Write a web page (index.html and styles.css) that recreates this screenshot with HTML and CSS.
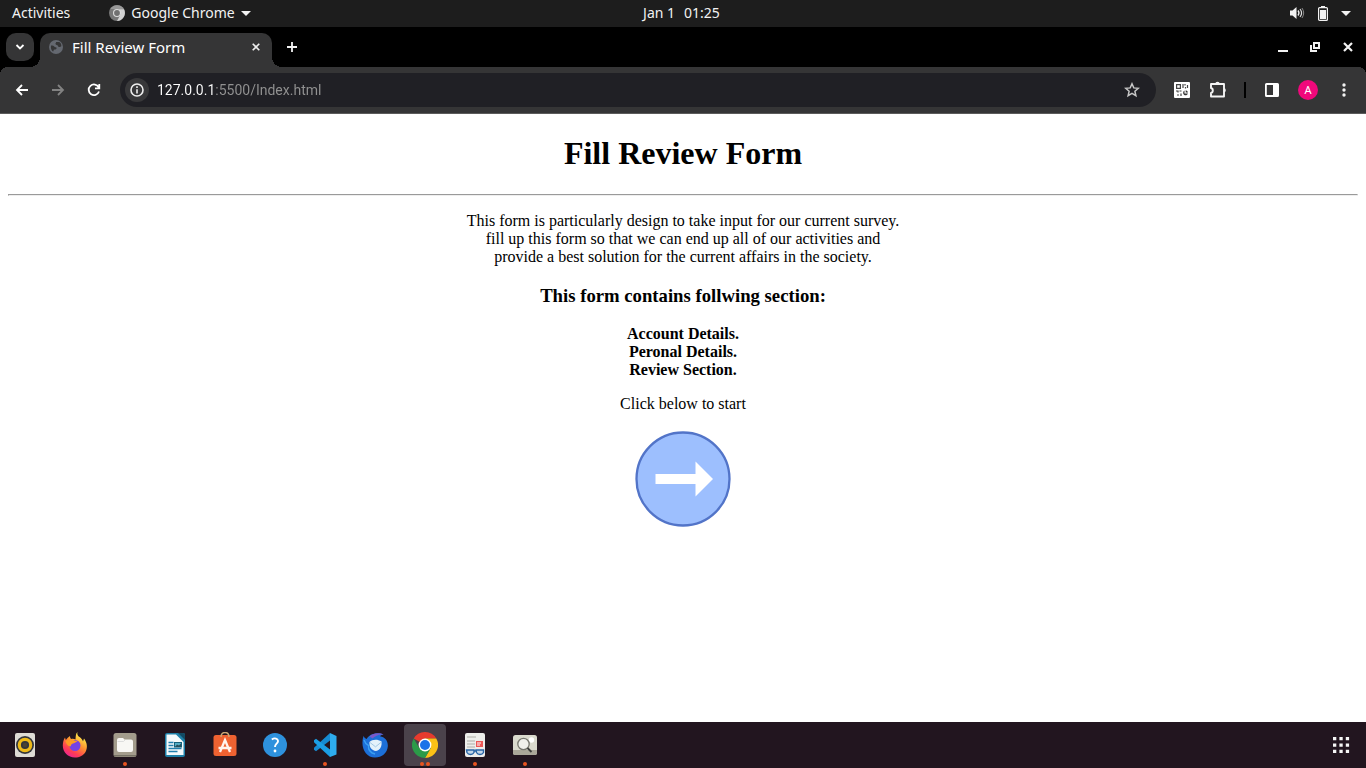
FILE: index.html
```html
<!DOCTYPE html>
<html lang="en">
<head>
<meta charset="utf-8">
<title>Fill Review Form</title>
<link rel="stylesheet" href="styles.css">
</head>
<body>
<header class="topbar">
  <div class="topbar-left">
    <button class="bar-button">Activities</button>
    <button class="bar-button app-menu">
      <svg width="16" height="16" viewBox="0 0 16 16" aria-hidden="true"><circle cx="8" cy="8" r="8" fill="#777"/><path d="M1.200 4A8 8 0 0 1 15 4.300H8z" fill="#999"/><path d="M15 4.300A8 8 0 0 1 8 16L11.500 9.500 10 4.300z" fill="#d2d2d2"/><circle cx="8" cy="8" r="4" fill="#ddd"/><circle cx="8" cy="8" r="2.900" fill="#707070"/></svg>
      <span>Google Chrome</span>
      <svg width="10" height="5" viewBox="0 0 10 5" aria-hidden="true"><path d="M0 0h10L5 5z" fill="#f2f2f2"/></svg>
    </button>
  </div>
  <button class="bar-button clock"><span>Jan 1</span><span>01:25</span></button>
  <button class="bar-button status" aria-label="System menu">
    <svg width="16" height="14" viewBox="0 0 16 14"><path d="M1 4.500h2.500L7.500 1v12L3.500 9.500H1z" fill="#f2f2f2"/><path d="M9 4.500q2 2.500 0 5" fill="none" stroke="#f2f2f2" stroke-width="1.300"/><path d="M11 3q3.200 4 0 8" fill="none" stroke="#ddd" stroke-width="1.200"/><path d="M13 2q3.400 5 0 10" fill="none" stroke="#888" stroke-width="1"/></svg>
    <svg width="10" height="15" viewBox="0 0 10 15"><path d="M3 0h4v1.500H3z" fill="#f2f2f2"/><rect x=".6" y="1.600" width="8.800" height="12.800" rx="1" fill="none" stroke="#f2f2f2" stroke-width="1.200"/><path d="M2 4h6v9H2z" fill="#f2f2f2"/></svg>
    <svg width="10" height="5" viewBox="0 0 10 5"><path d="M0 0h10L5 5z" fill="#f2f2f2"/></svg>
  </button>
</header>

<nav class="tabstrip" aria-label="Tabs">
  <button class="tab-search" aria-label="Search tabs"><svg width="10" height="6" viewBox="0 0 10 6"><path d="M1.500 1L5 4.500 8.500 1" fill="none" stroke="#fff" stroke-width="1.800"/></svg></button>
  <div class="tab">
    <svg width="14" height="14" viewBox="0 0 14 14" aria-hidden="true"><circle cx="7" cy="7" r="7" fill="#646870"/><path d="M2 5.500c2 0 3 .4 3.500 1.300s1.500 0 2 .9-.7 1.800-2 1.800-.6 2-1.500 2C2.300 10.300 1.500 8 2 5.500zM7 2h3.300c1.500 1 2.200 2.500 2 4.300-1.200 1.300-2.800.9-3.300-.4-.5-1-2-.6-2.500-1.800S7.500 3.300 7 2z" fill="#353536"/></svg>
    <span class="tab-title">Fill Review Form</span>
    <button class="tab-close" aria-label="Close tab"><svg width="8" height="8" viewBox="0 0 8 8"><path d="M.7.7l6.600 6.600M7.300.7L.7 7.300" stroke="#eee" stroke-width="1.600"/></svg></button>
  </div>
  <button class="new-tab" aria-label="New tab"><svg width="10" height="10" viewBox="0 0 10 10"><path d="M5 0v10M0 5h10" stroke="#f2f2f2" stroke-width="1.800"/></svg></button>
  <div class="window-controls">
    <button aria-label="Minimize"><svg width="12" height="12" viewBox="0 0 12 12"><path d="M1 9h10v2H1z" fill="#f2f2f2"/></svg></button>
    <button aria-label="Restore"><svg width="12" height="12" viewBox="0 0 12 12"><path d="M5 2h5v5H5zM2 4v6h6" fill="none" stroke="#f2f2f2" stroke-width="2"/></svg></button>
    <button aria-label="Close"><svg width="12" height="12" viewBox="0 0 12 12"><path d="M2 2l8 8M10 2l-8 8" stroke="#f2f2f2" stroke-width="2.200"/></svg></button>
  </div>
</nav>

<div class="toolbar">
  <button class="icon-button" aria-label="Back"><svg width="16" height="16" viewBox="0 0 16 16"><path d="M14 8H3M8 3L3 8l5 5" fill="none" stroke="#fff" stroke-width="1.800"/></svg></button>
  <button class="icon-button" aria-label="Forward"><svg width="16" height="16" viewBox="0 0 16 16"><path d="M2 8h11M8 3l5 5-5 5" fill="none" stroke="#828282" stroke-width="1.800"/></svg></button>
  <button class="icon-button" aria-label="Reload"><svg width="16" height="16" viewBox="0 0 16 16"><path d="M12.700 5.300A5.300 5.300 0 1 0 13 9.500M13.300 2v4.300H9" fill="none" stroke="#fff" stroke-width="1.800"/></svg></button>
  <div class="omnibox">
    <button class="site-info" aria-label="View site information"><svg width="14" height="14" viewBox="0 0 14 14"><circle cx="7" cy="7" r="6" fill="none" stroke="#eee" stroke-width="1.600"/><path d="M6.200 3.300h1.600V5H6.200zM6.200 6.200h1.600v4.300H6.200z" fill="#eee"/></svg></button>
    <input class="address" type="text" value="127.0.0.1:5500/Index.html" aria-label="Address" spellcheck="false">
    <button class="bookmark" aria-label="Bookmark this page"><svg width="16" height="16" viewBox="0 0 16 16"><path d="M8 1.800l1.800 4.100 4.500.4-3.400 3 1 4.400L8 11.400l-3.900 2.300 1-4.400-3.400-3 4.500-.4z" fill="none" stroke="#c7c7c7" stroke-width="1.500"/></svg></button>
  </div>
  <div class="extensions">
    <button class="icon-button" aria-label="QR code"><svg width="16" height="16" viewBox="0 0 16 16"><rect width="16" height="16" rx="1" fill="#fff"/><path d="M2.600 2.600h3.800v3.800H2.600zM9 2v4M11 2v1.500M13.500 3v3M11.500 5v1.500M2 9h2v1.500M5.500 9h2M3 13h2M7 11.500V14" fill="none" stroke="#444" stroke-width="1.200"/><path d="M10.500 8.500v3h3.500a2.500 2.500 0 1 1-3.500-3zM11.700 8.200a2.800 2.800 0 0 1 2.300 2.300h-2.300z" fill="#333"/></svg></button>
    <button class="icon-button" aria-label="Extensions"><svg width="18" height="18" viewBox="0 0 18 18"><path d="M2 3h13v12.500H2V12c2.400-.4 2.400-4.600 0-5z" fill="none" stroke="#f4f4f4" stroke-width="1.900" stroke-linejoin="round"/><path d="M6.300 3a2.200 2.200 0 0 1 4.400 0zM15 7a2.300 2.300 0 0 1 0 4.500z" fill="#f4f4f4"/></svg></button>
    <span class="divider"></span>
    <button class="icon-button" aria-label="Side panel"><svg width="16" height="16" viewBox="0 0 16 16"><rect x="1.900" y="2" width="12.200" height="12" rx=".6" fill="none" stroke="#fff" stroke-width="1.800"/><path d="M9 2h5v12H9z" fill="#fff"/></svg></button>
    <button class="icon-button" aria-label="Profile"><span class="avatar">A</span></button>
    <button class="icon-button" aria-label="Browser menu"><svg width="4" height="16" viewBox="0 0 4 16"><g fill="#f2f2f2"><circle cx="2" cy="3" r="1.700"/><circle cx="2" cy="8" r="1.700"/><circle cx="2" cy="13" r="1.700"/></g></svg></button>
  </div>
</div>

<main class="page">
  <h1>Fill Review Form</h1>
  <hr>
  <p>This form is particularly design to take input for our current survey.<br>fill up this form so that we can end up all of our activities and<br>provide a best solution for the current affairs in the society.</p>
  <h3>This form contains follwing section:</h3>
  <p class="sections">Account Details.<br>Peronal Details.<br>Review Section.</p>
  <p>Click below to start</p>
  <a class="start" href="#start" aria-label="Start"><svg width="100" height="100" viewBox="0 0 100 100"><circle cx="50" cy="50" r="46.500" fill="#9dbffe" stroke="#5274c8" stroke-width="2.300"/><path d="M22.500 45h40V32.500L80 50 62.500 67.500V55h-40z" fill="#fff"/></svg></a>
</main>

<footer class="dock">
  <div class="dock-apps">
    <button class="app" aria-label="Rhythmbox"><svg width="26" height="26" viewBox="0 0 26 26"><rect x="3" y="1" width="20" height="24" rx="2" fill="#dedbd5"/><circle cx="13" cy="13" r="9" fill="#34363b"/><circle cx="13" cy="13" r="5.700" fill="none" stroke="#efba19" stroke-width="3.200"/><circle cx="13" cy="13" r="2.200" fill="#4b4332"/></svg></button>
    <button class="app" aria-label="Firefox"><svg width="26" height="26" viewBox="0 0 26 26"><defs><linearGradient id="fox" x1=".8" y1="0" x2=".2" y2="1"><stop offset=".1" stop-color="#fff04a"/><stop offset=".45" stop-color="#ff9030"/><stop offset=".75" stop-color="#ff3b55"/><stop offset="1" stop-color="#e920a0"/></linearGradient></defs><path d="M15.500 0c-.8 2.500.5 4 2 5 2 1.300 3 3 3.500 4.500l1-3c3 4 4 9 1.500 13.500-2 3.500-6 5.500-10.500 5.500C6 25.500.8 20.300.8 13.800.8 10.500 1.500 7.700 3 5.500L3.800 8C5 6.300 6.500 5 8 4c0 1.300.4 2.200 1.200 3 1.700-.3 3-.1 4.300.5.3-3 0-5.500 2-7.500z" fill="url(#fox)"/><circle cx="13" cy="13.500" r="5.500" fill="#7542e5"/><path d="M3.500 9c3-2 6-2 9-.5l3 .7-3 1.800c-2.300.4-3.500 1.500-3.800 3.300C6.500 14.500 4 12 3.500 9z" fill="#ff9b24"/></svg></button>
    <button class="app running" aria-label="Files"><svg width="26" height="26" viewBox="0 0 26 26"><rect x="1.500" y="1" width="23" height="24" rx="2.500" fill="#a39c8c"/><path d="M2 23h22v1.500H2z" fill="#777265"/><path d="M5 8q0-2 2-2h4l1.500 1.500H19q2 0 2 2V18q0 2-2 2H7q-2 0-2-2z" fill="#f8f7f4"/><path d="M5.500 9.500h6L13 8" stroke="#ddd" fill="none"/></svg></button>
    <button class="app" aria-label="Writer"><svg width="26" height="26" viewBox="0 0 26 26"><path d="M3 3q0-2 2-2h16q2 0 2 2v20q0 2-2 2H5q-2 0-2-2z" fill="#1e80a8"/><path d="M4.500 2.500H14L21.500 10v13h-17z" fill="#f5fafb"/><path d="M16 1h5q2 0 2 2v5z" fill="#124a63"/><path d="M6.500 10.500h5M6.500 13.500h5M6.500 16.500h13M6.500 19.500h9" stroke="#217fae" stroke-width="1.300"/><rect x="12.500" y="10.500" width="7" height="4.500" fill="#54adc6" stroke="#16617b"/><path d="M13 15l2-2.500 2 1 2-2V15z" fill="#244e5c"/></svg></button>
    <button class="app" aria-label="Software"><svg width="26" height="26" viewBox="0 0 26 26"><rect x="1.500" y="3" width="23" height="21" rx="2.500" fill="#ef6231"/><path d="M9 5q0-4.500 4-4.500T17 5" fill="none" stroke="#cba775" stroke-width="1.400"/><path d="M8 20l5-12 5 12M6.500 16h13" fill="none" stroke="#fff3ed" stroke-width="2.300"/></svg></button>
    <button class="app" aria-label="Help"><svg width="26" height="26" viewBox="0 0 26 26"><circle cx="13" cy="13" r="12" fill="#2e91dd"/><path d="M9.800 7.500c4-2.800 7.500.5 5.700 3-.9 1.400-2.500 2-2.500 4.500" fill="none" stroke="#fff" stroke-width="1.900"/><circle cx="13" cy="19" r="1.400" fill="#fff"/></svg></button>
    <button class="app running" aria-label="Visual Studio Code"><svg width="26" height="26" viewBox="0 0 26 26"><path d="M18 1l6.500 3v18.500L18 25z" fill="#2eacee"/><path d="M18 8.500V1L2 15.800v2l2 1.500z" fill="#168bd2"/><path d="M18 17.500V25L2 10.200v-2l2-1.500z" fill="#1b9ee5"/></svg></button>
    <button class="app" aria-label="Thunderbird"><svg width="26" height="26" viewBox="0 0 26 26"><path d="M1.500 4c.8 1.500 1.800 2.500 3.200 3C7 2 15-.5 21.500 2.500c-1.500.2-2.500.8-3.500 1.700 5 .8 8.300 4.800 7.800 10.300C25.300 21 20 25.500 13 25.500 3.500 25.500-2 15 1.500 4z" fill="#1c6fd8"/><path d="M7.500 4.500C11 .8 18 .5 21.500 2.500c-5-.4-8.500 1.600-11 4z" fill="#7b59c9"/><path d="M7.500 10c2.500-2.500 8-3 12-.5.5 4.500-1 8.500-5.500 9.500-4.500-.5-7-4-6.500-9z" fill="#e4f1fa"/><path d="M8 10.500l5.500 4.300 6-4.800" stroke="#a3c9e6" fill="none"/><path d="M2 8c1 3 2.500 4.500 4.500 5.500C6 18 9 21 13 22" fill="none" stroke="#3ba0f2" stroke-width="1.400"/></svg></button>
    <button class="app active running" aria-label="Google Chrome"><svg width="26" height="26" viewBox="0 0 26 26"><path d="M13 13L1.740 6.500A13 13 0 0 1 24.260 6.500H13z" fill="#e63b2e"/><path d="M13 13l5.600 3.300L13 26A13 13 0 0 0 24.260 6.500H13z" fill="#fbc116"/><path d="M13 13v6.500L13 26A13 13 0 0 1 1.740 6.500L7.400 16.300z" fill="#2b9b48"/><path d="M13 26l5.600-9.700L13 13l-5.600 3.300L12 20z" fill="#2b9b48"/><circle cx="13" cy="13" r="6.400" fill="#fff"/><circle cx="13" cy="13" r="5" fill="#1a73e8"/></svg></button>
    <button class="app running" aria-label="Document Viewer"><svg width="26" height="26" viewBox="0 0 26 26"><rect x="3" y="1" width="20" height="24" rx="2" fill="#eeedeb"/><path d="M5 5h9M5 9h8M5 12h8M5 15h8" stroke="#c4c2bf" stroke-width="1.500"/><rect x="14" y="9" width="7" height="6" fill="#ed5756"/><path d="M15 11h4M15 13h3" stroke="#fff"/><path d="M4.500 18h7.500v2.500q-1 2-3.500 2t-3.500-2zM14 18h7.500v2.500q-1 2-3.500 2t-3.500-2zM12 19h2" fill="#c2d6e9" stroke="#2865a7" stroke-width="1.400"/></svg></button>
    <button class="app running" aria-label="Image Viewer"><svg width="26" height="26" viewBox="0 0 26 26"><rect x="1" y="3" width="24" height="20" rx="2.500" fill="#dad9cd"/><path d="M1 18h24v3q0 2-2 2H3q-2 0-2-2z" fill="#aaa799"/><circle cx="19.500" cy="8" r="2.700" fill="#fff"/><circle cx="11.500" cy="12" r="5.700" fill="#f0f0eb" stroke="#77776f" stroke-width="1.300"/><path d="M15.500 16l4 4" stroke="#3d3d3b" stroke-width="1.800"/></svg></button>
  </div>
  <button class="app" aria-label="Show applications"><svg width="18" height="18" viewBox="0 0 18 18"><path d="M1 1h3.300v3.300H1zM7.400 1h3.300v3.300H7.400zM13.800 1h3.300v3.300h-3.300zM1 7.400h3.300v3.300H1zM7.400 7.400h3.300v3.300H7.400zM13.800 7.400h3.300v3.300h-3.300zM1 13.800h3.300v3.300H1zM7.400 13.800h3.300v3.300H7.400zM13.800 13.800h3.300v3.300h-3.300z" fill="#f5f5f5"/></svg></button>
</footer>
</body>
</html>
```
FILE: styles.css
```css
* { box-sizing: border-box; }

body {
  margin: 0;
  height: 100vh;
  display: flex;
  flex-direction: column;
  background: #fff;
  color: #000;
  font-family: "Noto Sans", sans-serif;
  font-size: 14px;
}

button {
  margin: 0;
  padding: 0;
  border: 0;
  background: none;
  color: inherit;
  font: inherit;
  display: flex;
  align-items: center;
  justify-content: center;
}

svg { display: block; flex: none; }

/* Desktop bar */
.topbar {
  flex: none;
  height: 27px;
  padding: 0 15px 1px 12px;
  display: grid;
  grid-template-columns: 1fr auto 1fr;
  align-items: center;
  background: #1d1d1d;
  color: #f2f2f2;
}
.topbar-left { display: flex; gap: 39px; }
.bar-button { line-height: 20px; white-space: nowrap; }
.app-menu { gap: 6px; }
.clock { gap: 9px; }
.status { justify-self: end; gap: 13px; }

/* Tab strip */
.tabstrip {
  flex: none;
  height: 40px;
  padding: 6px 6px 0;
  display: flex;
  background: #000;
  color: #fff;
}
.tab-search {
  width: 28px;
  height: 28px;
  border-radius: 10px;
  background: #353536;
}
.tab {
  position: relative;
  width: 232px;
  margin-left: 6px;
  padding: 0 8px 6px 9px;
  display: flex;
  align-items: center;
  gap: 9px;
  border-radius: 10px 10px 0 0;
  background: #353536;
}
.tab::before,
.tab::after {
  content: "";
  position: absolute;
  bottom: 0;
  width: 10px;
  height: 10px;
}
.tab::before {
  right: 100%;
  background: radial-gradient(circle at 0 0, transparent 10px, #353536 10px);
}
.tab::after {
  left: 100%;
  background: radial-gradient(circle at 100% 0, transparent 10px, #353536 10px);
}
.tab-title { flex: 1; font-size: 15px; line-height: 20px; white-space: nowrap; }
.tab-close { width: 16px; height: 16px; }
.new-tab { width: 36px; height: 28px; margin-left: 2px; }
.window-controls { margin-left: auto; display: flex; }
.window-controls button { width: 32px; height: 28px; }
.window-controls button:last-child { width: 24px; margin-left: 5px; }

/* Address bar */
.toolbar {
  flex: none;
  height: 47px;
  padding: 0 4px;
  display: flex;
  align-items: center;
  border-bottom: 1px solid #5b5b5b;
  background:
    radial-gradient(circle at 8px 8px, #353536 8px, #000 8px) 0 0 / 8px 8px no-repeat,
    radial-gradient(circle at 0 8px, #353536 8px, #000 8px) 100% 0 / 8px 8px no-repeat,
    #353536;
}
.icon-button { width: 36px; height: 34px; }
.omnibox {
  flex: 1;
  height: 34px;
  margin: 0 8px;
  padding: 0 12px 0 5px;
  display: flex;
  align-items: center;
  border-radius: 17px;
  background: #202025;
}
.site-info {
  width: 24px;
  height: 24px;
  border-radius: 50%;
  background: #38383a;
}
.address {
  flex: 1;
  min-width: 0;
  height: 24px;
  margin: 0 8px;
  padding: 0;
  border: 0;
  outline: 0;
  font: 14px/20px Roboto, sans-serif;
  color: transparent;
  background: linear-gradient(to right, #fff 58px, #929292 58px);
  -webkit-background-clip: text;
  background-clip: text;
}
.bookmark { width: 24px; height: 24px; }
.extensions { display: flex; align-items: center; }
.divider { width: 2px; height: 16px; margin: 0 8px; background: #000; }
.avatar {
  width: 20px;
  height: 20px;
  border-radius: 50%;
  background: #f0087b;
  color: #fff;
  font-size: 11px;
  line-height: 20px;
  text-align: center;
}

/* Document */
.page {
  flex: 1;
  min-height: 0;
  overflow: auto;
  padding: 0 8px;
  font: 16px/18px "Liberation Serif", serif;
  text-align: center;
}
.page h1 { margin: 21px 0 23px; font-size: 32px; line-height: 36px; }
.page hr { margin: 0; }
.page p { margin: 16px 0; }
.page h3 { margin: 19px 0; font-size: 1.17em; line-height: 21px; }
.page .sections { font-weight: bold; }
.start { display: inline-block; border-radius: 50%; }

/* Dock */
.dock {
  flex: none;
  height: 46px;
  display: flex;
  justify-content: space-between;
  background: #22151f;
}
.dock-apps { display: flex; gap: 8px; padding-left: 4px; }
.app {
  position: relative;
  width: 42px;
  height: 42px;
  margin-top: 2px;
  border-radius: 4px;
}
.dock > .app { margin-right: 4px; }
.active { background: #4b424b; }
.running::after {
  content: "";
  position: absolute;
  bottom: 0;
  left: 19px;
  width: 4px;
  height: 4px;
  border-radius: 50%;
  background: #e95420;
}
.active::after { left: 16px; box-shadow: 6px 0 #e95420; }
```
